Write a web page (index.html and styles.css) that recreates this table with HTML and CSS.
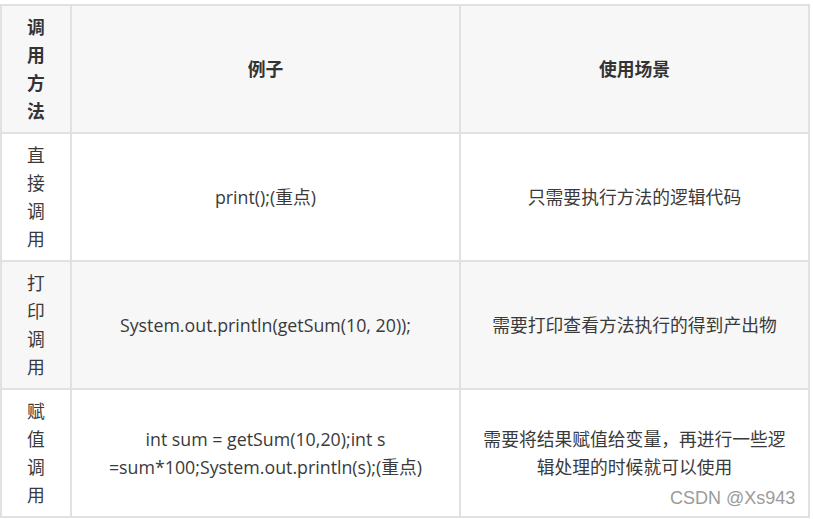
FILE: index.html
```html
<!DOCTYPE html>
<html lang="zh">
<head>
<meta charset="utf-8">
<link rel="stylesheet" href="styles.css">
</head>
<body>
<div class="page">
  <table class="tbl">
    <colgroup>
      <col class="c1">
      <col class="c2">
      <col class="c3">
    </colgroup>
    <thead>
      <tr>
        <th class="m">调用方法</th>
        <th>例子</th>
        <th>使用场景</th>
      </tr>
    </thead>
    <tbody>
      <tr>
        <td class="m">直接调用</td>
        <td>print();(重点)</td>
        <td>只需要执行方法的逻辑代码</td>
      </tr>
      <tr class="alt">
        <td class="m">打印调用</td>
        <td>System.out.println(getSum(10, 20));</td>
        <td>需要打印查看方法执行的得到产出物</td>
      </tr>
      <tr>
        <td class="m">赋值调用</td>
        <td>int sum = getSum(10,20);int s =sum*100;System.out.println(s);(重点)</td>
        <td>需要将结果赋值给变量，再进行一些逻辑处理的时候就可以使用</td>
      </tr>
    </tbody>
  </table>
  <div class="wm">CSDN @Xs943</div>
</div>
</body>
</html>
```
FILE: styles.css
```css
html, body {
  margin: 0;
  padding: 0;
  background: #ffffff;
}
.page {
  position: relative;
  width: 813px;
  height: 519px;
  padding-top: 4px;
  box-sizing: border-box;
  overflow: hidden;
}
.tbl {
  border-collapse: collapse;
  table-layout: fixed;
  width: 810px;
  font-family: "Open Sans", "Noto Sans CJK SC", sans-serif;
  font-size: 17.8px;
  line-height: 28px;
  color: #3a3a3a;
}
.c1 { width: 70px; }
.c2 { width: 389px; }
.c3 { width: 349px; }
.tbl th,
.tbl td {
  border: 2px solid #dfe2e5;
  padding: 7px 16px;
  text-align: center;
  vertical-align: middle;
}
.tbl th {
  font-weight: 700;
  color: #333333;
}
.tbl thead tr {
  background: #f7f7f7;
}
.tbl tr.alt {
  background: #f7f7f7;
}
.tbl .m {
  padding-left: 25px;
  padding-right: 25px;
}
.wm {
  position: absolute;
  left: 670px;
  top: 488px;
  font-family: "Liberation Sans", Arial, sans-serif;
  font-size: 18px;
  color: #9b9b9b;
  white-space: nowrap;
}
```
